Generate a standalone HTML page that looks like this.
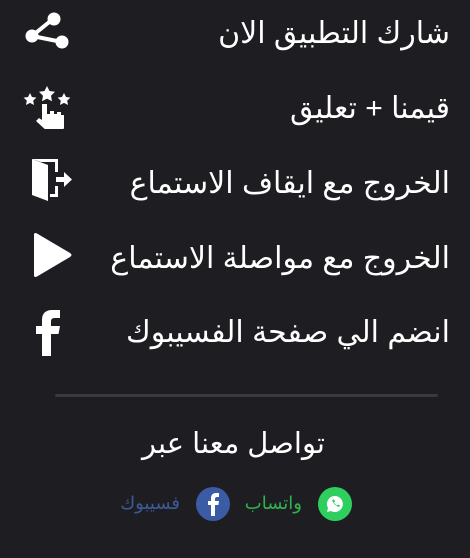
<!DOCTYPE html>
<html lang="ar"><head><meta charset="utf-8">
<style>
html,body{margin:0;padding:0}
body{width:470px;height:558px;background:#1e1e22;position:relative;overflow:hidden;font-family:"Liberation Sans","Noto Sans CJK JP","DejaVu Sans",sans-serif;color:#fff}
.t{position:absolute;right:20px;direction:rtl;font-size:30px;line-height:40px;white-space:nowrap;font-weight:400}
svg{position:absolute}
.hr{position:absolute;left:55px;width:383px;top:394px;height:3px;background:#39393e;border-radius:2px}
</style></head><body>
<div class="t" style="top:14px">شارك التطبيق الان</div>
<div class="t" style="top:89px">قيمنا + تعليق</div>
<div class="t" style="top:164px">الخروج مع ايقاف الاستماع</div>
<div class="t" style="top:239px">الخروج مع مواصلة الاستماع</div>
<div class="t" style="top:313px">انضم الي صفحة الفسيبوك</div>

<svg style="left:20px;top:8px" width="55" height="45" viewBox="20 8 55 45">
<path d="M53 19 L32 36 L62 42" stroke="#fff" stroke-width="4" fill="none"/>
<circle cx="54" cy="19" r="6.5" fill="#fff"/><circle cx="32" cy="36" r="6.5" fill="#fff"/><circle cx="62" cy="42" r="6.5" fill="#fff"/>
</svg>
<svg style="left:22px;top:84px" width="50" height="45" viewBox="0 0 50 45">
<path d="M25 2l2.5 5 5.5.8-4 3.9 1 5.5-5-2.6-5 2.6 1-5.5-4-3.9 5.5-.8z" fill="#fff"/>
<path d="M8 9l2 4 4.4.6-3.2 3 .8 4.4-4-2.1-4 2.1.8-4.4-3.2-3 4.4-.6z" fill="#fff"/>
<path d="M42 9l2 4 4.4.6-3.2 3 .8 4.4-4-2.1-4 2.1.8-4.4-3.2-3 4.4-.6z" fill="#fff"/>
<path d="M20 20h5v10h3v-3h4v3h3v-2h4v3h3v12a5 5 0 0 1-5 5H26l-12-11 3-3 3 2z" fill="#fff"/>
</svg>
<svg style="left:30px;top:156px" width="45" height="48" viewBox="0 0 45 48">
<path d="M2 3h26v13h-3V6H11z" fill="#fff"/>
<path d="M2 3l16 6v36L2 39z" fill="#fff"/>
<path d="M25 30h3v11h-8v-3h5z" fill="#fff"/>
<path d="M26 21h8v-5l8 7.5-8 7.5v-5h-8z" fill="#fff"/>
</svg>
<svg style="left:30px;top:230px" width="46" height="54" viewBox="0 0 46 54">
<path d="M4 5Q4 2 7 3.5L40 23Q43 25 40 27L7 46.5Q4 48 4 45z" fill="#fff"/>
</svg>
<svg style="left:33px;top:308px" width="30" height="50" viewBox="0 0 30 50">
<path d="M9 48V26H3v-8h6v-6C9 5 13 2 19 2h8v8h-5c-3 0-4 1-4 4v4h9l-1.5 8H18v22z" fill="#fff"/>
</svg>

<div class="hr"></div>
<div class="t" style="right:145px;top:424px;font-size:29px">تواصل معنا عبر</div>

<svg style="left:318px;top:487px" width="34" height="34" viewBox="0 0 34 34">
<circle cx="17" cy="17" r="17" fill="#2fcf5f"/>
<path d="M17 9a8 8 0 0 0-7 12l-1 4 4-1a8 8 0 1 0 4-15z" fill="#fff"/>
<path d="M14 13c1 3 3 6 7 7l1-1.5-2-1-1 1c-1.5-.7-2.5-1.8-3-3l1-1-1-2z" fill="#2fcf5f"/>
</svg>
<div class="t" style="right:168px;top:488px;font-size:18px;line-height:30px;color:#2db34f">واتساب</div>
<svg style="left:196px;top:487px" width="34" height="34" viewBox="0 0 34 34">
<circle cx="17" cy="17" r="17" fill="#3b5ba5"/>
<path d="M15 29V18h-3v-4h3v-3c0-3 2-5 5-5h3v4h-2c-1 0-2 .5-2 2v2h4l-.6 4H19v11z" fill="#fff"/>
</svg>
<div class="t" style="right:290px;top:488px;font-size:18px;line-height:30px;color:#3d5a98">فسيبوك</div>
</body></html>
